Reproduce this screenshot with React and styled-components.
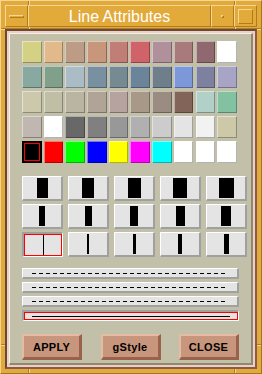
import React from 'react'
import styled, { createGlobalStyle } from 'styled-components'

const GlobalStyle = createGlobalStyle`
    html, body {
        margin: 0;
        padding: 0;
        background: #e2aa3a;
    }
    body {
        font-family: 'Liberation Sans', Arial, sans-serif;
    }
`

const swatchRows = [
    ['#d4d084', '#e2b98a', '#bc9c84', '#c8967a', '#c07e76', '#d0626a', '#b0909a', '#a87a7c', '#906870', '#ffffff'],
    ['#88a8a0', '#80a08c', '#aabcc6', '#7890a0', '#768a94', '#6c849a', '#6e7e8a', '#7c98d8', '#7e80a0', '#a8a4c6'],
    ['#ccc8ac', '#c0bea4', '#bab4a2', '#b0a496', '#b6a29e', '#a89888', '#9a8c80', '#826458', '#b0d0c8', '#82c2a2'],
    ['#c0b8b0', '#ffffff', '#686868', '#808080', '#989898', '#b0b0b0', '#cccccc', '#e4e4e4', '#f2f2f2', '#ccc8a8'],
    ['#000000', '#ff0000', '#00ff00', '#0000ff', '#ffff00', '#ff00ff', '#00ffff', '#ffffff', '#ffffff', '#ffffff'],
]

const widths = [11, 12, 13, 14, 15, 6, 7, 8, 9, 10, 1, 2, 3, 4, 5]

export default function App() {
    return (
        <>
            <GlobalStyle />
            <Window>
                <TitleBar>
                    <MenuButton><span /></MenuButton>
                    <Title>Line Attributes</Title>
                    <MinButton><span /></MinButton>
                    <MaxButton><span /></MaxButton>
                </TitleBar>
                <Client>
                    <Panel>
                        <ColorGrid>
                            {swatchRows.flat().map((c, i) => (
                                <Swatch key={i} style={{ background: c }} $selected={i === 40} />
                            ))}
                        </ColorGrid>
                        <WidthGrid>
                            {widths.map((w, i) => (
                                <WidthButton key={i} $selected={w === 1}>
                                    <Bar style={{ width: w }} />
                                </WidthButton>
                            ))}
                        </WidthGrid>
                        <StyleList>
                            <StyleRow><Stroke $dashed /></StyleRow>
                            <StyleRow><Stroke $dashed /></StyleRow>
                            <StyleRow><Stroke $dashed /></StyleRow>
                            <StyleRow $selected><Stroke /></StyleRow>
                        </StyleList>
                        <Actions>
                            <ActionButton>APPLY</ActionButton>
                            <ActionButton>gStyle</ActionButton>
                            <ActionButton>CLOSE</ActionButton>
                        </Actions>
                    </Panel>
                </Client>
            </Window>
        </>
    )
}

const Window = styled.div`
    width: 262px;
    height: 374px;
    box-sizing: border-box;
    padding: 4px;
    border: 1px solid;
    border-color: #f6d690 #a8741a #a8741a #f6d690;
    background-color: #e2aa3a;
    background-image:
        linear-gradient(to right, transparent 27px, #b07c1c 27px, #b07c1c 28px, #f6d690 28px, #f6d690 29px, transparent 29px),
        linear-gradient(to right, transparent 233px, #b07c1c 233px, #b07c1c 234px, #f6d690 234px, #f6d690 235px, transparent 235px),
        linear-gradient(to bottom, transparent 27px, #b07c1c 27px, #b07c1c 28px, #f6d690 28px, #f6d690 29px, transparent 29px),
        linear-gradient(to bottom, transparent 343px, #b07c1c 343px, #b07c1c 344px, #f6d690 344px, #f6d690 345px, transparent 345px);
    display: flex;
    flex-direction: column;
`
const TitleBar = styled.div`
    height: 22px;
    display: flex;
    margin-bottom: 2px;
    background: #e2aa3a;
`
const Segment = styled.div`
    box-sizing: border-box;
    border: 1px solid;
    border-color: #f6d690 #b07c1c #b07c1c #f6d690;
    background: #e2aa3a;
    display: flex;
    align-items: center;
    justify-content: center;
`
const MenuButton = styled(Segment)`
    width: 23px;
    span {
        width: 15px;
        height: 3px;
        box-sizing: border-box;
        border: 1px solid;
        border-color: #f6d690 #b07c1c #b07c1c #f6d690;
    }
`
const Title = styled(Segment)`
    flex: 1;
    color: #ffffff;
    font-size: 16px;
    padding-top: 1px;
`
const MinButton = styled(Segment)`
    width: 23px;
    span {
        width: 3px;
        height: 3px;
        box-sizing: border-box;
        border: 1px solid;
        border-color: #f6d690 #b07c1c #b07c1c #f6d690;
    }
`
const MaxButton = styled(Segment)`
    width: 23px;
    span {
        width: 15px;
        height: 15px;
        box-sizing: border-box;
        border: 1px solid;
        border-color: #f6d690 #b07c1c #b07c1c #f6d690;
    }
`
const Client = styled.div`
    flex: 1;
    box-sizing: border-box;
    border: 2px solid;
    border-color: #6c4838 #8a5a4a #8a5a4a #6c4838;
    padding: 2px;
    background: #ecd0c8;
    display: flex;
`
const Panel = styled.div`
    flex: 1;
    box-sizing: border-box;
    border-style: solid;
    border-width: 1px 2px 2px 1px;
    border-color: #f4f2e4 #8e8a6a #8e8a6a #f4f2e4;
    background: #c2c0a8;
    padding: 7px 0 3px 12px;
    display: flex;
    flex-direction: column;
`
const ColorGrid = styled.div`
    display: grid;
    grid-template-columns: repeat(10, 19.5px);
    grid-auto-rows: 22px;
    column-gap: 2.2px;
    row-gap: 3px;
`
const Swatch = styled.div`
    box-sizing: border-box;
    box-shadow: inset 1px 1px rgba(255, 255, 255, 0.45), inset -1px -1px rgba(0, 0, 0, 0.3);
    ${p => p.$selected && `
        box-shadow: inset 0 0 0 2px #000, inset 0 0 0 3px #ff0000;
    `}
`
const WidthGrid = styled.div`
    margin-top: 13px;
    display: grid;
    grid-template-columns: repeat(5, 41px);
    grid-auto-rows: 25px;
    column-gap: 5px;
    row-gap: 3px;
`
const WidthButton = styled.div`
    box-sizing: border-box;
    background: #e4e4e4;
    border-style: solid;
    border-width: 1px 2px 2px 1px;
    border-color: #ffffff #a0a0a0 #a0a0a0 #ffffff;
    display: flex;
    align-items: center;
    justify-content: center;
    ${p => p.$selected && `
        border-width: 2px 1px 1px 2px;
        border-color: #a0a0a0 #ffffff #ffffff #a0a0a0;
        box-shadow: inset 0 0 0 1px #ff0000;
    `}
`
const Bar = styled.div`
    height: 20px;
    background: #000;
`
const StyleList = styled.div`
    margin-top: 11px;
    width: 217px;
    display: flex;
    flex-direction: column;
    gap: 3px;
`
const StyleRow = styled.div`
    height: 11px;
    box-sizing: border-box;
    background: #e4e4e4;
    border-style: solid;
    border-width: 1px 2px 2px 1px;
    border-color: #ffffff #a0a0a0 #a0a0a0 #ffffff;
    padding: 0 9px;
    display: flex;
    align-items: center;
    ${p => p.$selected && `
        border-width: 2px 1px 1px 2px;
        border-color: #a0a0a0 #ffffff #ffffff #a0a0a0;
        box-shadow: inset 0 0 0 1px #ff0000;
        padding: 0 8px 0 8px;
    `}
`
const Stroke = styled.div`
    flex: 1;
    height: 1px;
    background: ${p => p.$dashed
        ? 'repeating-linear-gradient(to right, #000 0 4px, transparent 4px 7px)'
        : '#000'};
`
const Actions = styled.div`
    margin-top: 13px;
    width: 217px;
    display: flex;
    justify-content: space-between;
`
const ActionButton = styled.div`
    width: 60px;
    height: 26px;
    box-sizing: border-box;
    background: #c8967c;
    border-style: solid;
    border-width: 2px 3px 3px 2px;
    border-color: #e4bca4 #9a624a #9a624a #e4bca4;
    display: flex;
    align-items: center;
    justify-content: center;
    font-size: 11px;
    font-weight: bold;
    letter-spacing: 0.3px;
    color: #000;
`
